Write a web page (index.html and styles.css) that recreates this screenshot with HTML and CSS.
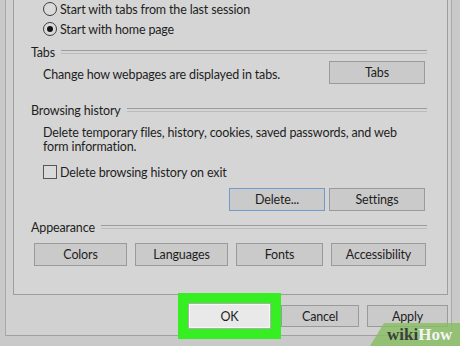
FILE: index.html
```html
<!DOCTYPE html>
<html lang="en">
<head>
  <meta charset="UTF-8">
  <meta name="viewport" content="width=device-width, initial-scale=1.0">
  <title>Internet Options</title>
  <link rel="stylesheet" href="styles.css">
</head>
<body>

  <div class="window">
    <div class="panel">
      <!-- Startup -->
      <div class="options">
        <div class="option"><span class="radio"></span>Start with tabs from the last session</div>
        <div class="option"><span class="radio checked"></span>Start with home page</div>
      </div>

      <!-- Tabs -->
      <div class="group-title title-tabs"><span>Tabs</span></div>
      <div class="group-row">
        <p>Change how webpages are displayed in tabs.</p>
        <button class="btn btn-wide">Tabs</button>
      </div>

      <!-- Browsing history -->
      <div class="group-title title-history"><span>Browsing history</span></div>
      <p class="desc">Delete temporary files, history, cookies, saved passwords, and web<br>form information.</p>
      <div class="option option-check"><span class="check"></span>Delete browsing history on exit</div>
      <div class="btn-row">
        <button class="btn btn-wide focused">Delete...</button>
        <button class="btn btn-wide">Settings</button>
      </div>

      <!-- Appearance -->
      <div class="group-title title-appearance"><span>Appearance</span></div>
      <div class="appearance">
        <button class="btn btn-colors">Colors</button>
        <button class="btn btn-languages">Languages</button>
        <button class="btn btn-fonts">Fonts</button>
        <button class="btn btn-access">Accessibility</button>
      </div>
    </div>

    <div class="footer">
      <button class="btn btn-ok">OK</button>
      <button class="btn btn-cancel">Cancel</button>
      <button class="btn btn-apply">Apply</button>
    </div>
  </div>

  <div class="wikihow"><span class="wiki">wiki</span><span class="how">How</span></div>

</body>
</html>
```

FILE: styles.css
```css
* {
  margin: 0;
  padding: 0;
  box-sizing: border-box;
}

body {
  width: 460px;
  height: 346px;
  overflow: hidden;
  position: relative;
  background-color: #c9c9c9;
  font-family: 'Lato', 'Liberation Sans', sans-serif;
  font-size: 12.5px;
  letter-spacing: -0.15px;
  color: #1e1e1e;
}

.window {
  margin-left: 5px;
  width: 447px;
  height: 337px;
  background-color: #d1d1d1;
  border-left: 1px solid #a9a9a9;
  border-right: 1px solid #a9a9a9;
  border-bottom: 1px solid #a0a0a0;
}

.panel {
  margin-left: 7px;
  width: 435px;
  background-color: #d5d5d5;
  border-left: 1px solid #9e9e9e;
  border-right: 1px solid #9e9e9e;
  border-bottom: 1px solid #9e9e9e;
  padding: 0 20px 28px 17px;
}

/* Radio and checkbox rows */
.options {
  margin-top: -1px;
}

.option {
  display: flex;
  align-items: center;
  height: 20px;
  padding-left: 12px;
}

.radio,
.check {
  width: 14px;
  height: 14px;
  margin-right: 3px;
  border: 1px solid #3d3d3d;
  background-color: #dadada;
  position: relative;
}

.radio {
  border-radius: 50%;
}

.radio.checked::after {
  content: '';
  position: absolute;
  top: 3px;
  left: 3px;
  width: 6px;
  height: 6px;
  border-radius: 50%;
  background-color: #111;
}

.check {
  border-color: #555;
}

.option-check {
  margin-top: 8px;
}

/* Group headings with rule */
.group-title {
  display: flex;
  align-items: center;
  height: 14px;
  gap: 6px;
}

.group-title::after {
  content: '';
  flex: 1;
  height: 2px;
  border-top: 1px solid #9c9c9c;
  border-bottom: 1px solid #bcbcbc;
}

.title-tabs {
  margin-top: 6px;
}

.title-history {
  margin-top: 19px;
}

.title-appearance {
  margin-top: 9px;
}

.group-row {
  display: flex;
  align-items: center;
  justify-content: space-between;
  margin-top: 2px;
  padding-left: 12px;
}

.group-row p {
  padding-top: 3px;
}

.desc {
  margin-top: 9px;
  padding-left: 12px;
  line-height: 14px;
}

.btn-row {
  display: flex;
  justify-content: flex-end;
  gap: 4px;
  margin-top: 6px;
}

.appearance {
  display: flex;
  gap: 8px;
  margin-top: 9px;
  padding-left: 3px;
}

/* Buttons */
.btn {
  height: 23px;
  font-family: inherit;
  font-size: 12.5px;
  letter-spacing: -0.15px;
  color: #1e1e1e;
  background-color: #cacaca;
  border: 1px solid #9a9a9a;
}

.btn-wide {
  width: 96px;
  margin-right: 2px;
}

.btn-row .btn-wide:first-child {
  margin-right: 0;
}

.focused {
  border-color: #6f9bc9;
}

.btn-colors,
.btn-languages {
  width: 93px;
}

.btn-fonts {
  width: 87px;
}

.btn-access {
  width: 95px;
}

.footer {
  display: flex;
  align-items: center;
  justify-content: flex-end;
  margin-top: 8px;
  padding-right: 3px;
}

.btn-ok {
  width: 83px;
  height: 26px;
  margin-right: 10px;
  background-color: #e9e9e9;
  border-color: #acacac;
  box-shadow: inset 0 0 0 1px #f7f7f7;
  outline: 10px solid #36ef22;
}

.btn-cancel {
  width: 78px;
  height: 22px;
  margin-right: 8px;
}

.btn-apply {
  width: 81px;
  height: 22px;
}

/* Watermark */
.wikihow {
  position: absolute;
  right: 0;
  bottom: 0;
  width: 90px;
  height: 23px;
  padding: 1px 5px 0 17px;
  background-color: rgba(134, 190, 96, 0.8);
  clip-path: polygon(14px 0, 100% 0, 100% 100%, 0 100%);
  font-family: 'Liberation Serif', serif;
  font-weight: bold;
  font-size: 17px;
  letter-spacing: 0;
  line-height: 22px;
}

.wiki {
  color: #3e3e3e;
}

.how {
  color: #f4f4f4;
}
```
